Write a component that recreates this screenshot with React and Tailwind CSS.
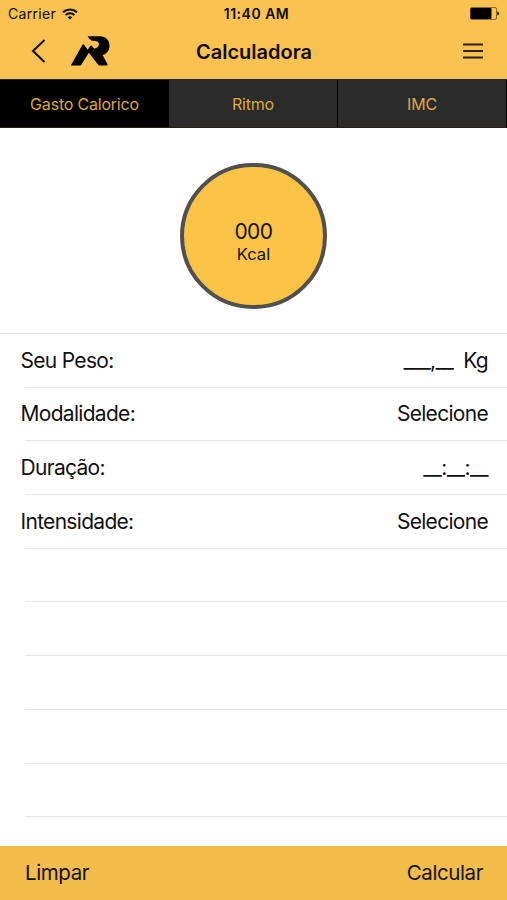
const rows = [
  { label: 'Seu Peso:', kind: 'weight' },
  { label: 'Modalidade:', kind: 'select' },
  { label: 'Duração:', kind: 'time' },
  { label: 'Intensidade:', kind: 'select' },
  {}, {}, {}, {}, {},
];

function Value({ kind }) {
  if (kind === 'weight')
    return (
      <span className="flex">
        <span className="tracking-[-0.7px]">___,__</span>
        <span className="ml-[10px]">Kg</span>
      </span>
    );
  if (kind === 'time') return <span className="tracking-[-0.6px]">__:__:__</span>;
  if (kind === 'select') return <span>Selecione</span>;
  return null;
}

export default function App() {
  return (
    <div className="flex h-[900px] w-[507px] flex-col overflow-hidden bg-white font-['Inter',sans-serif] text-[#111]">
      <header className="h-[79px] bg-[#f9c251] text-[#0d0a04]">
        <div className="flex h-[27px] items-center pl-2 pr-[7px] text-[14px] leading-none">
          <div className="flex flex-1 items-center gap-[6px]">
            <span className="tracking-[0.3px]">Carrier</span>
            <svg width="16" height="12" viewBox="0 0 16 12" fill="none" stroke="currentColor" strokeWidth="2">
              <path d="M1 4.2a10.2 10.2 0 0 1 14 0M3.5 7a6.6 6.6 0 0 1 9 0" />
              <path d="M8 11.5 5.7 9.2a3.4 3.4 0 0 1 4.6 0z" fill="currentColor" stroke="none" />
            </svg>
          </div>
          <span className="pl-[5px] text-center font-semibold tracking-[0.5px]">11:40 AM</span>
          <div className="flex flex-1 justify-end">
            <svg width="31" height="13" viewBox="0 0 31 13">
              <rect x="1.5" y="0.5" width="26" height="12" rx="1.5" fill="none" stroke="#6b5322" strokeWidth="0.8" />
              <rect x="1.5" y="1" width="21" height="11" rx="1" fill="#000" />
              <path d="M28.2 4.5q2 .5 2 2t-2 2z" fill="#2b200a" />
            </svg>
          </div>
        </div>
        <div className="grid h-[50px] grid-cols-3 items-center">
          <div className="flex items-center pl-[31px]">
            <svg className="-mt-[2px]" width="15" height="24" viewBox="0 0 15 24" fill="none" stroke="currentColor" strokeWidth="2">
              <path d="M13.500 1 2 12l11.500 11" />
            </svg>
            <svg className="-mt-[2px] ml-[24px]" width="40" height="30" viewBox="0 0 40 30">
              <path
                fill="#000"
                d="M.8 29.400 12.200 9.200q1.100-1.700 2.200 0l3.300 4.600 2.600-3.800q.9-1 1.800 0l2.200 2.800c3-.8 4.800-2.400 4.700-4.700-.1-2.400-1.800-3.200-4.600-3.200q-3.600 0-5-1.900L17.600.3H30c5.700 0 9.500 4 9.500 9.200 0 4.900-2.600 8.400-6.800 9.700l4.700 8.700q.6 1.500-1 1.500H28.800L18.800 16.800 10.800 29.400z"
              />
            </svg>
          </div>
          <h1 className="pl-px text-center text-[20px] font-semibold">Calculadora</h1>
          <svg className="-mt-[2px] mr-[24px] justify-self-end" width="20" height="16" viewBox="0 0 20 16" stroke="#2b200a" strokeWidth="2">
            <path d="M0 1.500h20M0 8h20M0 14.500h20" />
          </svg>
        </div>
      </header>

      <nav className="grid h-[49px] grid-cols-3 border-y border-[#29200f] bg-[#2b2b2b] text-[16px] tracking-[-0.2px] text-[#dca93d]">
        <button className="bg-black">Gasto Calorico</button>
        <button className="border-r border-black">Ritmo</button>
        <button className="border-r border-black">IMC</button>
      </nav>

      <section className="flex h-[205px] justify-center pt-[35px]">
        <div className="flex h-[146px] w-[147px] flex-col items-center rounded-full border-4 border-[#505050] bg-[#fbc446] pt-[52px]">
          <span className="text-[21px] leading-[25px] tracking-[-0.5px]">000</span>
          <span className="text-[16.5px] leading-[20px]">Kcal</span>
        </div>
      </section>

      <main className="h-[513px] border-t border-[#e6e6e6]">
        {rows.map((row, i) => (
          <div key={i} className="flex h-[53.7px] flex-col">
            <div className="flex flex-1 items-center justify-between pl-[20.5px] pr-[19px] text-[21px] tracking-[-0.7px]">
              <span>{row.label}</span>
              <Value kind={row.kind} />
            </div>
            <div className="ml-[25px] h-px bg-[#e6e6e6]" />
          </div>
        ))}
      </main>

      <footer className="flex h-[54px] items-center justify-between bg-[#f2bd4b] pl-[25px] pr-[24px] pt-px text-[20.5px] tracking-[-0.4px]">
        <button>Limpar</button>
        <button>Calcular</button>
      </footer>
    </div>
  );
}
